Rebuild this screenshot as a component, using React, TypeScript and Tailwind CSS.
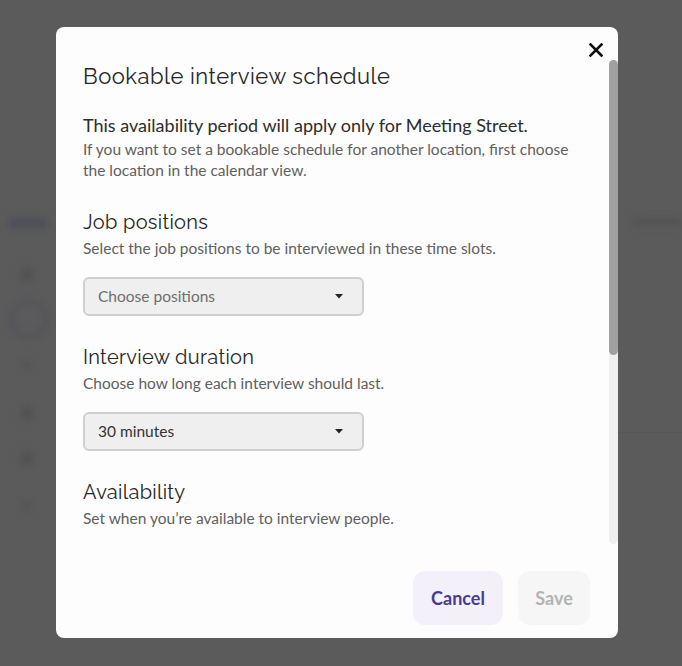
import React from "react";

function Caret() {
  return (
    <svg width="8" height="5" viewBox="0 0 8 5" className="shrink-0">
      <path d="M0 0 L8 0 L4 4.5 Z" fill="#222" />
    </svg>
  );
}

function Select({ label, placeholder }: { label: string; placeholder?: boolean }) {
  return (
    <div className="mt-[18px] flex h-[39px] w-[281px] items-center justify-between rounded-[6px] border-2 border-[#cfcfcf] bg-[#efefef] pl-[13px] pr-[19px]">
      <span className={`text-[15.5px] ${placeholder ? "text-[#6e6e6e]" : "text-[#333]"}`}>{label}</span>
      <Caret />
    </div>
  );
}

const heading = "font-['Raleway','Open_Sans',sans-serif] text-[20px] leading-[28px] tracking-[0.3px] text-[#262626]";
const sub = "text-[15.5px] leading-[21px] text-[#5f5f5f]";

export default function App() {
  return (
    <div className="relative h-[666px] w-[682px] overflow-hidden bg-[#5b5b5b] font-['Lato',sans-serif]">
      {/* faint background page */}
      <div className="flex h-full flex-col items-start pl-[8px] pt-[218px] blur-[3px]">
        <div className="h-[10px] w-[40px] rounded bg-[#4f4f5c]" />
        <div className="ml-[12px] mt-[40px] h-[14px] w-[14px] rounded-full bg-[#525252]" />
        <div className="ml-[2px] mt-[18px] h-[38px] w-[38px] rounded-full border-[3px] border-[#51515a]" />
        <div className="ml-[14px] mt-[22px] h-[10px] w-[10px] rounded-full bg-[#555]" />
        <div className="ml-[12px] mt-[36px] h-[14px] w-[14px] rounded-full bg-[#525252]" />
        <div className="ml-[12px] mt-[32px] h-[14px] w-[14px] rounded-full bg-[#525252]" />
        <div className="ml-[14px] mt-[34px] h-[10px] w-[10px] rounded-full bg-[#555]" />
      </div>
      <div className="absolute right-[0px] top-[218px] h-[8px] w-[50px] rounded bg-[#535353] blur-[3px]" />
      <div className="absolute left-[618px] top-[432px] h-[1px] w-[64px] bg-[#565656]" />

      {/* modal */}
      <div className="absolute left-[56px] top-[27px] flex h-[611px] w-[562px] flex-col rounded-[8px] bg-[#fdfdfd] text-[#222]">
        <div className="flex h-[33px] shrink-0 justify-end pr-[15px] pt-[16px]">
          <svg width="14" height="14" viewBox="0 0 14 14">
            <path d="M1.5 1.5 L12.5 12.5 M12.5 1.5 L1.5 12.5" stroke="#111" strokeWidth="2.6" strokeLinecap="square" />
          </svg>
        </div>
        <div className="flex h-[484px] shrink-0">
          <div className="flex-1 overflow-hidden pl-[27px] pt-[2px]">
            <h1 className="font-['Raleway','Open_Sans',sans-serif] text-[22px] leading-[28px] tracking-[0.5px] text-[#262626]">
              Bookable interview schedule
            </h1>
            <p className="mt-[23px] text-[18px] leading-[24px] text-[#2c2c2c]">
              This availability period will apply only for Meeting Street.
            </p>
            <p className={`mt-[2px] ${sub}`}>
              If you want to set a bookable schedule for another location, first choose
              <br />
              the location in the calendar view.
            </p>

            <h2 className={`mt-[27px] ${heading}`}>Job positions</h2>
            <p className={`mt-[2px] ${sub}`}>Select the job positions to be interviewed in these time slots.</p>
            <Select label="Choose positions" placeholder />

            <h2 className={`mt-[27px] ${heading}`}>Interview duration</h2>
            <p className={`mt-[2px] ${sub}`}>Choose how long each interview should last.</p>
            <Select label="30 minutes" />

            <h2 className={`mt-[27px] ${heading}`}>Availability</h2>
            <p className={`mt-[2px] ${sub}`}>Set when you’re available to interview people.</p>
          </div>
          <div className="flex w-[9px] shrink-0 flex-col rounded-full bg-[#efefef]">
            <div className="h-[295px] rounded-full bg-[#a0a0a0]" />
          </div>
        </div>
        <div className="flex shrink-0 justify-end gap-[15px] pr-[28px] pt-[27px]">
          <button className="flex h-[54px] w-[90px] items-center justify-center rounded-[12px] bg-[#f3f0fa] text-[18px] font-bold text-[#4a3b8c]">
            Cancel
          </button>
          <button className="flex h-[54px] w-[72px] items-center justify-center rounded-[12px] bg-[#f6f6f6] text-[18px] font-bold text-[#b3b3b3]">
            Save
          </button>
        </div>
      </div>
    </div>
  );
}
